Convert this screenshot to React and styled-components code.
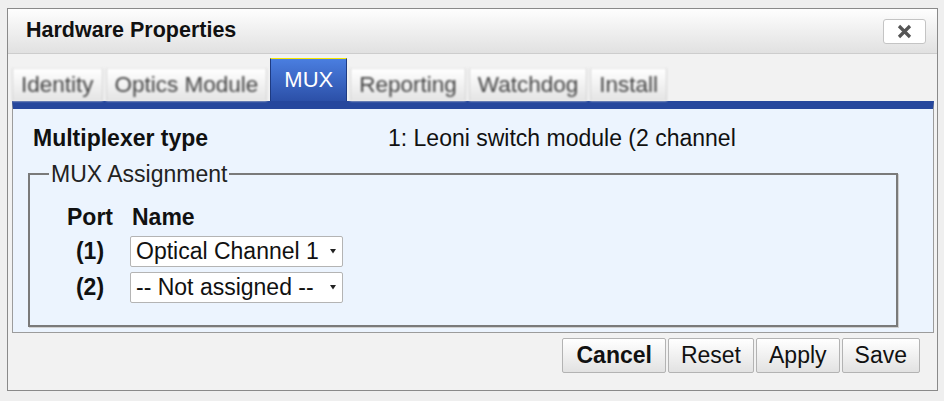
import React from "react";
import styled, { createGlobalStyle } from "styled-components";

const GlobalStyle = createGlobalStyle`
  html, body {
    margin: 0;
    padding: 0;
    background: #efefef;
    font-family: "Liberation Sans", Arial, sans-serif;
    color: #111;
  }
`;

const Page = styled.div`
  padding: 8px 7px;
`;

const Dialog = styled.div`
  box-sizing: border-box;
  width: 931px;
  height: 383px;
  border: 1px solid #8a8a8a;
  background: #f2f2f2;
  display: flex;
  flex-direction: column;
`;

const TitleBar = styled.div`
  height: 44px;
  border-bottom: 1px solid #cdcdcd;
  background: linear-gradient(#fefefe, #e1e1e1);
  display: flex;
  align-items: center;
  justify-content: space-between;
  padding: 0 11px 0 18px;
`;

const Title = styled.div`
  font-size: 21.5px;
  font-weight: bold;
  color: #111;
  padding-bottom: 1px;
`;

const CloseButton = styled.button`
  box-sizing: border-box;
  width: 43px;
  height: 25px;
  margin-top: 1px;
  border: 1px solid #c4c4c4;
  border-radius: 3px;
  background: #fff;
  display: flex;
  align-items: center;
  justify-content: center;
  padding: 0;
`;

const Body = styled.div`
  padding: 0 3px 0 4px;
`;

const TabRow = styled.div`
  height: 47px;
  display: flex;
  align-items: flex-end;
  gap: 3px;
`;

const Tab = styled.div`
  box-sizing: border-box;
  height: ${(p) => (p.active ? "43px" : "33px")};
  padding: ${(p) => (p.active ? "8px 13px 0" : "0 8px")};
  display: flex;
  align-items: ${(p) => (p.active ? "flex-start" : "center")};
  font-size: ${(p) => (p.active ? "22px" : "22.5px")};
  white-space: nowrap;
  color: ${(p) => (p.active ? "#fff" : "#444")};
  background: ${(p) =>
    p.active
      ? "linear-gradient(#4a7ee0, #2c50a8)"
      : "linear-gradient(#ffffff, #e4e4e4)"};
  border: 1px solid ${(p) => (p.active ? "#1e3b82" : "#d2d2d2")};
  border-top-color: ${(p) => (p.active ? "#f2e600" : "#e6e6e6")};
  border-bottom: none;
  filter: ${(p) => (p.active ? "none" : "blur(1.1px)")};
`;

const Panel = styled.div`
  box-sizing: border-box;
  height: 232px;
  border: 1px solid #9c9c9c;
  border-top: 8px solid #26479d;
  background: #ecf4fe;
  padding: 16px 0 0 20px;
`;

const TypeRow = styled.div`
  display: flex;
  font-size: 23px;
  line-height: 26px;
`;

const TypeLabel = styled.div`
  width: 355px;
  font-weight: bold;
`;

const TypeValue = styled.div`
  width: 350px;
  overflow: hidden;
  white-space: nowrap;
`;

const Group = styled.fieldset`
  box-sizing: border-box;
  width: 870px;
  margin: 10px 0 0 -5px;
  padding: 0 0 22px 0;
  border: 2px solid #7a7a7a;
  box-shadow: 1px 1px 0 #d0d0d0;
`;

const Legend = styled.legend`
  margin-left: 19px;
  padding: 0 2px;
  font-size: 23px;
  line-height: 26px;
  color: #222;
`;

const PortGrid = styled.div`
  display: grid;
  grid-template-columns: 64px 213px;
  column-gap: 8px;
  row-gap: 5px;
  padding: 17px 0 0 28px;
  font-size: 23px;
`;

const HeadCell = styled.div`
  font-weight: bold;
  line-height: 26px;
  margin-bottom: 1px;
  text-align: ${(p) => (p.center ? "center" : "left")};
  padding-left: ${(p) => (p.center ? "0" : "2px")};
`;

const PortCell = styled.div`
  font-weight: bold;
  text-align: center;
  line-height: 31px;
`;

const Select = styled.div`
  box-sizing: border-box;
  height: 31px;
  border: 1px solid #b4b4b4;
  border-radius: 2px;
  background: #fff;
  display: flex;
  align-items: center;
  justify-content: space-between;
  padding: 0 6px 0 5px;
  white-space: nowrap;
`;

const Buttons = styled.div`
  display: flex;
  justify-content: flex-end;
  gap: 2px;
  margin: 5px 14px 0 0;
`;

const Button = styled.button`
  box-sizing: border-box;
  height: 35px;
  padding: 0 ${(p) => (p.bold ? "13px" : "12px")};
  border: 1px solid #b3b3b3;
  border-radius: 2px;
  background: linear-gradient(#ffffff, #e2e2e2);
  font-family: "Liberation Sans", Arial, sans-serif;
  font-size: 23px;
  font-weight: ${(p) => (p.bold ? "bold" : "normal")};
  color: #111;
`;

const Arrow = () => (
  <svg width="6" height="5" viewBox="0 0 6 5">
    <path d="M0 0h6L3 4.5z" fill="#222" />
  </svg>
);

const CloseIcon = () => (
  <svg width="15" height="15" viewBox="0 0 15 15">
    <path
      d="M2 2L13 13M13 2L2 13"
      stroke="#555"
      strokeWidth="3.2"
      strokeLinecap="butt"
    />
  </svg>
);

const tabs = ["Identity", "Optics Module", "MUX", "Reporting", "Watchdog", "Install"];

const ports = [
  { port: "(1)", name: "Optical Channel 1" },
  { port: "(2)", name: "-- Not assigned --" },
];

export default function App() {
  return (
    <>
      <GlobalStyle />
      <Page>
        <Dialog>
          <TitleBar>
            <Title>Hardware Properties</Title>
            <CloseButton>
              <CloseIcon />
            </CloseButton>
          </TitleBar>
          <Body>
            <TabRow>
              {tabs.map((t) => (
                <Tab key={t} active={t === "MUX"}>
                  {t}
                </Tab>
              ))}
            </TabRow>
            <Panel>
              <TypeRow>
                <TypeLabel>Multiplexer type</TypeLabel>
                <TypeValue>1: Leoni switch module (2 channel</TypeValue>
              </TypeRow>
              <Group>
                <Legend>MUX Assignment</Legend>
                <PortGrid>
                  <HeadCell center>Port</HeadCell>
                  <HeadCell>Name</HeadCell>
                  {ports.map((p) => (
                    <React.Fragment key={p.port}>
                      <PortCell>{p.port}</PortCell>
                      <Select>
                        <span>{p.name}</span>
                        <Arrow />
                      </Select>
                    </React.Fragment>
                  ))}
                </PortGrid>
              </Group>
            </Panel>
            <Buttons>
              <Button bold>Cancel</Button>
              <Button>Reset</Button>
              <Button>Apply</Button>
              <Button>Save</Button>
            </Buttons>
          </Body>
        </Dialog>
      </Page>
    </>
  );
}
